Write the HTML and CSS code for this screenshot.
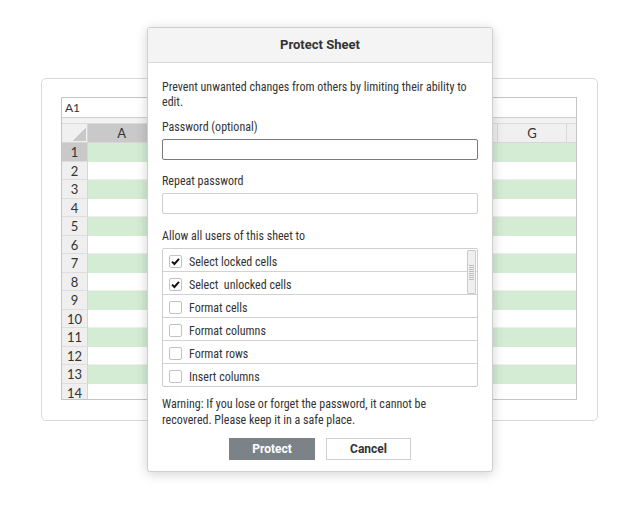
FILE: index.html
```html
<!DOCTYPE html>
<html>
<head>
<meta charset="utf-8">
<link rel="stylesheet" href="styles.css">
</head>
<body>
<div class="stage">
  <div class="card">
    <div class="sheet">
      <div class="namebox">A1</div>
      <div class="band"></div>
      <div class="hrow">
        <div class="corner"></div>
        <div class="colh sel">A</div><div class="colh"></div><div class="colh"></div><div class="colh"></div><div class="colh"></div><div class="colh"></div><div class="colh">G</div><div class="colh"></div>
      </div>
      <div class="row g"><div class="rowh sel">1</div><div class="cells"></div></div>
      <div class="row"><div class="rowh">2</div><div class="cells"></div></div>
      <div class="row g"><div class="rowh">3</div><div class="cells"></div></div>
      <div class="row"><div class="rowh">4</div><div class="cells"></div></div>
      <div class="row g"><div class="rowh">5</div><div class="cells"></div></div>
      <div class="row"><div class="rowh">6</div><div class="cells"></div></div>
      <div class="row g"><div class="rowh">7</div><div class="cells"></div></div>
      <div class="row"><div class="rowh">8</div><div class="cells"></div></div>
      <div class="row g"><div class="rowh">9</div><div class="cells"></div></div>
      <div class="row"><div class="rowh">10</div><div class="cells"></div></div>
      <div class="row g"><div class="rowh">11</div><div class="cells"></div></div>
      <div class="row"><div class="rowh">12</div><div class="cells"></div></div>
      <div class="row g"><div class="rowh">13</div><div class="cells"></div></div>
      <div class="row"><div class="rowh">14</div><div class="cells"></div></div>
    </div>
  </div>

  <div class="dialog">
    <div class="dhead">Protect Sheet</div>
    <div class="dbody">
      <p class="intro">Prevent unwanted changes from others by limiting their ability to edit.</p>
      <div class="label l1">Password (optional)</div>
      <div class="input focus"></div>
      <div class="label l2">Repeat password</div>
      <div class="input"></div>
      <div class="label l3">Allow all users of this sheet to</div>
      <div class="list">
        <div class="item"><span class="cb"><svg viewBox="0 0 13 13" width="13" height="13"><path d="M3 6.6 L5.4 9 L10 3.8" fill="none" stroke="#111" stroke-width="1.9"/></svg></span>Select locked cells</div>
        <div class="item"><span class="cb"><svg viewBox="0 0 13 13" width="13" height="13"><path d="M3 6.6 L5.4 9 L10 3.8" fill="none" stroke="#111" stroke-width="1.9"/></svg></span>Select&nbsp; unlocked cells</div>
        <div class="item"><span class="cb"></span>Format cells</div>
        <div class="item"><span class="cb"></span>Format columns</div>
        <div class="item"><span class="cb"></span>Format rows</div>
        <div class="item last"><span class="cb"></span>Insert columns</div>
        <div class="scroll"><span class="grip"></span></div>
      </div>
      <p class="warn">Warning: If you lose or forget the password, it cannot be recovered. Please keep it in a safe place.</p>
      <div class="buttons">
        <button class="btn primary">Protect</button>
        <button class="btn">Cancel</button>
      </div>
    </div>
  </div>
</div>
</body>
</html>
```

FILE: styles.css
```css
* { box-sizing: border-box; }
html, body { margin: 0; padding: 0; background: #fff; }
.stage { position: relative; width: 640px; height: 506px; overflow: hidden; }

.card {
  margin: 78px 0 0 41px;
  width: 557px;
  height: 343px;
  border: 1px solid #d9d9d9;
  border-radius: 5px;
  padding: 18px 21px 0 19px;
  background: #fff;
}
.sheet {
  width: 516px;
  height: 303px;
  border: 1px solid #c4c4c4;
  overflow: hidden;
  font-family: Lato, "Open Sans", sans-serif;
  color: #333;
}
.namebox {
  height: 20px;
  border-bottom: 1px solid #d0d0d0;
  font-size: 12px;
  line-height: 20px;
  padding-left: 3px;
}
.band { height: 6px; background: #f2f2f2; border-bottom: 1px solid #dcdcdc; }
.hrow {
  display: flex;
  height: 19px;
  background: #f0f0f0;
  border-bottom: 1px solid #d6d6d6;
}
.corner {
  flex: 0 0 26px;
  background: linear-gradient(135deg, transparent 60%, #c9c9c9 60%) no-repeat;
  background-size: 18px 15px;
  background-position: right 1px bottom 1px;
  border-right: 1px solid #d6d6d6;
}
.colh {
  flex: 0 0 68.4px;
  border-right: 1px solid #d8d8d8;
  text-align: center;
  font-size: 13px;
  line-height: 18px;
}
.colh.sel { background: #c9c9c9; }
.row {
  display: flex;
  height: 18.5px;
}
.rowh {
  flex: 0 0 26px;
  background: #efefef;
  border-right: 1px solid #d6d6d6;
  border-bottom: 1px solid #dedede;
  text-align: center;
  font-size: 13px;
  line-height: 18px;
}
.rowh.sel { background: #c9c9c9; }
.cells { flex: 1; border-bottom: 1px solid #eeeeee; }
.row.g .cells { background: #d4ebd4; border-bottom-color: #d4ebd4; }

.dialog {
  position: absolute;
  left: 147px;
  top: 27px;
  width: 346px;
  height: 445px;
  background: #fff;
  border: 1px solid #cfcfcf;
  border-radius: 3px;
  box-shadow: 0 2px 12px rgba(0,0,0,0.18);
  font-family: Roboto, "Liberation Sans", sans-serif;
  font-stretch: 87%;
  color: #333;
  font-size: 12px;
}
.dhead {
  height: 35px;
  background: #f4f4f4;
  border-bottom: 1px solid #d8d8d8;
  border-radius: 3px 3px 0 0;
  text-align: center;
  font-weight: 700;
  font-size: 13px;
  font-stretch: 95%;
  line-height: 34px;
}
.dbody { padding: 17px 14px 0 14px; }
.intro { margin: 0; line-height: 15px; }
.label { line-height: 15px; }
.l1 { margin-top: 10px; }
.l2 { margin-top: 14px; }
.l3 { margin-top: 15px; }
.input {
  margin-top: 4px;
  height: 21px;
  border: 1px solid #cfcfcf;
  border-radius: 2px;
}
.input.focus { border-color: #7a7a7a; }
.list {
  position: relative;
  margin-top: 4px;
  height: 139px;
  border: 1px solid #cfcfcf;
  border-radius: 2px;
}
.item {
  display: flex;
  align-items: center;
  gap: 7px;
  height: 23px;
  padding-left: 6px;
  padding-top: 3px;
  border-bottom: 1px solid #d2d2d2;
  line-height: 18px;
}
.item.last { border-bottom: 0; height: 22px; }
.cb {
  width: 13px;
  height: 13px;
  border: 1px solid #c2c2c2;
  border-radius: 2px;
  background: #fff;
  display: flex;
  align-items: center;
  justify-content: center;
}
.cb svg { display: block; margin: -1px; }
.scroll {
  position: absolute;
  right: 1px;
  top: 1px;
  width: 9px;
  height: 44px;
  background: #efefef;
  border: 1px solid #cbcbcb;
  border-radius: 1px;
  display: flex;
  align-items: center;
  justify-content: center;
}
.grip {
  width: 5px;
  height: 15px;
  background: repeating-linear-gradient(#bdbdbd 0 1px, transparent 1px 2px);
}
.warn { margin: 9px 0 0 0; line-height: 16px; }
.buttons {
  display: flex;
  justify-content: center;
  gap: 11px;
  margin-top: 10px;
}
.btn {
  width: 85px;
  height: 22px;
  border: 1px solid #cfcfcf;
  background: #fff;
  color: #333;
  font-family: Roboto, "Liberation Sans", sans-serif;
  font-stretch: 95%;
  font-weight: 700;
  font-size: 12px;
  padding: 0;
  border-radius: 0;
}
.btn.primary {
  width: 86px;
  background: #7b8389;
  border-color: #7b8389;
  color: #fff;
}
```
